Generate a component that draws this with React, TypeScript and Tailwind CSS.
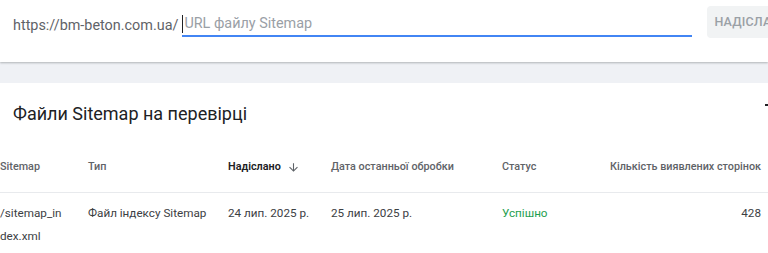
import React from 'react';

const cols = 'grid grid-cols-[88px_140px_103px_171px_106px_1fr]';

export default function App() {
  return (
    <div className="w-[768px] h-[253px] overflow-hidden bg-[#eff1f5] font-['Roboto',sans-serif]">
      {/* Submit bar */}
      <div className="relative z-10 h-[62px] bg-white shadow-[0_1px_2px_rgba(60,64,67,0.35)] flex items-start pt-[11px] pl-[13px] overflow-hidden">
        <span className="shrink-0 whitespace-nowrap text-[14.4px] leading-[20px] text-[#5f6368] mt-[5px]">https://bm-beton.com.ua/</span>
        <div className="shrink-0 ml-[4px] w-[510px] h-[26px] border-b-2 border-[#4285f4] flex items-center">
          <span className="w-px h-[18px] bg-[#202124] mr-px mt-[2px]" />
          <span className="text-[14.4px] text-[#9aa0a6] whitespace-nowrap mt-[2px]">URL файлу Sitemap</span>
        </div>
        <button className="shrink-0 ml-[15px] mt-[-5px] h-[32px] px-[7px] rounded bg-[#f1f3f4] text-[12.5px] font-medium tracking-[0.2px] text-[#9aa0a6] whitespace-nowrap">
          НАДІСЛАТИ
        </button>
      </div>

      {/* Submitted sitemaps card */}
      <div className="mt-[21px] bg-white h-[200px] overflow-hidden">
        <div className="flex items-center justify-between h-[60px] pl-[13px]">
          <h2 className="text-[18px] text-[#202124]">Файли Sitemap на перевірці</h2>
          <svg className="shrink-0 mr-[-18px] mt-[-6px]" width="24" height="24" viewBox="0 0 24 24" fill="#202124">
            <path d="M10 18h4v-2h-4v2zM3 6v2h18V6H3zm3 7h12v-2H6v2z" />
          </svg>
        </div>

        <div className={`${cols} h-[50px] items-center text-[10.8px] font-medium text-[#5f6368] border-b border-[#e8eaed] pr-[7px] whitespace-nowrap`}>
          <div>Sitemap</div>
          <div>Тип</div>
          <div className="flex items-center gap-[6px] font-semibold text-[#202124]">
            Надіслано
            <svg width="13" height="13" viewBox="0 0 24 24" fill="#5f6368">
              <path d="M20 12l-1.41-1.41L13 16.17V4h-2v12.17l-5.58-5.59L4 12l8 8 8-8z" />
            </svg>
          </div>
          <div>Дата останньої обробки</div>
          <div>Статус</div>
          <div className="flex justify-end">Кількість виявлених сторінок</div>
        </div>

        <div className={`${cols} pt-[9px] text-[11.7px] leading-[23px] text-[#3c4043] pr-[7px]`}>
          <div>/sitemap_in<br />dex.xml</div>
          <div>Файл індексу Sitemap</div>
          <div>24 лип. 2025 р.</div>
          <div>25 лип. 2025 р.</div>
          <div className="text-[#1e9e4f]">Успішно</div>
          <div className="text-right">428</div>
        </div>
      </div>
    </div>
  );
}
